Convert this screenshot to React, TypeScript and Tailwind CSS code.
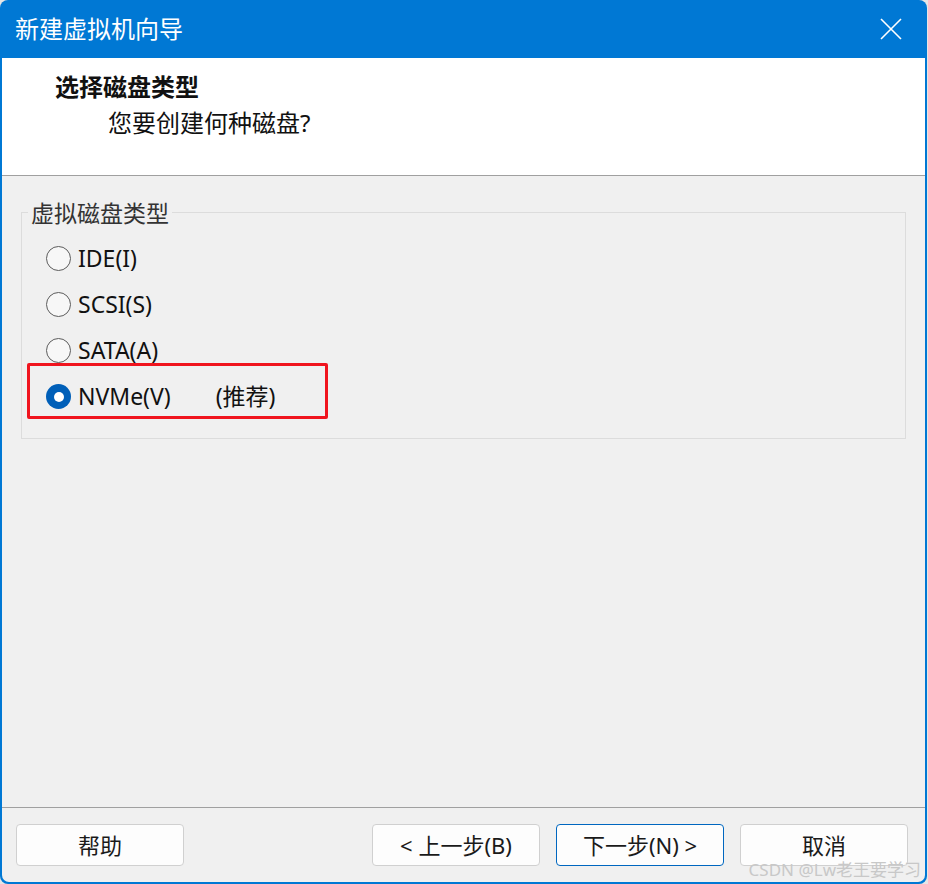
import React, { useState } from 'react';

const FONT = { fontFamily: '"Noto Sans", "Noto Sans CJK SC", sans-serif' };

const options = [
  { id: 'ide', label: 'IDE(I)' },
  { id: 'scsi', label: 'SCSI(S)' },
  { id: 'sata', label: 'SATA(A)' },
  { id: 'nvme', label: 'NVMe(V)', note: '(推荐)' },
];

function Radio({ checked }: { checked: boolean }) {
  if (checked) {
    return (
      <span className="w-[25px] h-[25px] rounded-full bg-[#005fb8] flex items-center justify-center shrink-0">
        <span className="w-[10px] h-[10px] rounded-full bg-white" />
      </span>
    );
  }
  return <span className="w-[25px] h-[25px] rounded-full border-[1.5px] border-[#5c5c5c] bg-[#f7f7f7] shrink-0" />;
}

function Button({ children, primary }: { children: React.ReactNode; primary?: boolean }) {
  return (
    <button
      type="button"
      className={`w-[168px] h-[42px] rounded-[4px] bg-[#fdfdfd] text-[22px] leading-none text-[#1a1a1a] flex items-center justify-center border ${
        primary ? 'border-[#0067c0]' : 'border-[#d0d0d0]'
      }`}
    >
      {children}
    </button>
  );
}

export default function App() {
  const [picked, setPicked] = useState('nvme');

  return (
    <div className="w-[928px] h-[884px] bg-[#e6e6e6] overflow-hidden" style={FONT}>
      <div className="w-[927px] h-[884px] flex flex-col rounded-t-[8px] rounded-b-[8px] overflow-hidden bg-[#0078d4]">
        {/* title bar */}
        <div className="h-[58px] shrink-0 flex items-center justify-between pl-[15px] pr-[24px]">
          <span className="text-white text-[24px] leading-none">新建虚拟机向导</span>
          <svg width="24" height="24" viewBox="0 0 24 24" className="text-white">
            <path d="M2 2 L22 22 M22 2 L2 22" stroke="currentColor" strokeWidth="1.6" fill="none" />
          </svg>
        </div>

        <div className="flex-1 flex flex-col mx-[2px] mb-[2px] rounded-b-[7px] overflow-hidden bg-[#f0f0f0]">
          {/* header */}
          <div className="h-[118px] shrink-0 bg-white border-b border-[#a0a0a0] pt-[13px] pl-[53px]">
            <div className="text-[24px] font-bold text-[#111] leading-[32px]">选择磁盘类型</div>
            <div className="text-[24px] text-[#111] leading-[32px] mt-[4px] pl-[53px]">您要创建何种磁盘?</div>
          </div>

          {/* body */}
          <div className="flex-1 px-[19px] pt-[36px]">
            <div className="relative h-[227px] border border-[#dcdcdc] pt-[33px] pl-[24px]">
              <span className="absolute -top-[15px] left-[6px] px-[3px] bg-[#f0f0f0] text-[23px] leading-[30px] text-[#333]">
                虚拟磁盘类型
              </span>
              <div className="flex flex-col gap-[21px]">
                {options.map((o) => (
                  <label
                    key={o.id}
                    className="flex items-center gap-[7px] h-[25px] cursor-default"
                    onClick={() => setPicked(o.id)}
                  >
                    <Radio checked={picked === o.id} />
                    <span className="text-[23px] text-[#111] leading-none">{o.label}</span>
                    {o.note && <span className="text-[23px] text-[#111] leading-none ml-[38px]">{o.note}</span>}
                  </label>
                ))}
              </div>
              <div className="absolute left-[5px] top-[150px] w-[301px] h-[56px] border-[3px] border-[#f0141e] rounded-[2px] pointer-events-none" />
            </div>
          </div>

          {/* footer */}
          <div className="h-[75px] shrink-0 border-t border-[#a0a0a0] flex items-start pt-[16px] pl-[14px] pr-[17px] relative">
            <Button>帮助</Button>
            <div className="flex-1" />
            <div className="flex gap-[16px]">
              <Button>&lt; 上一步(B)</Button>
              <Button primary>下一步(N) &gt;</Button>
              <Button>取消</Button>
            </div>
            <span className="absolute right-[4px] bottom-[4px] text-[17px] leading-none text-[#c8c8c8] pointer-events-none">
              CSDN @Lw老王要学习
            </span>
          </div>
        </div>
      </div>
    </div>
  );
}
